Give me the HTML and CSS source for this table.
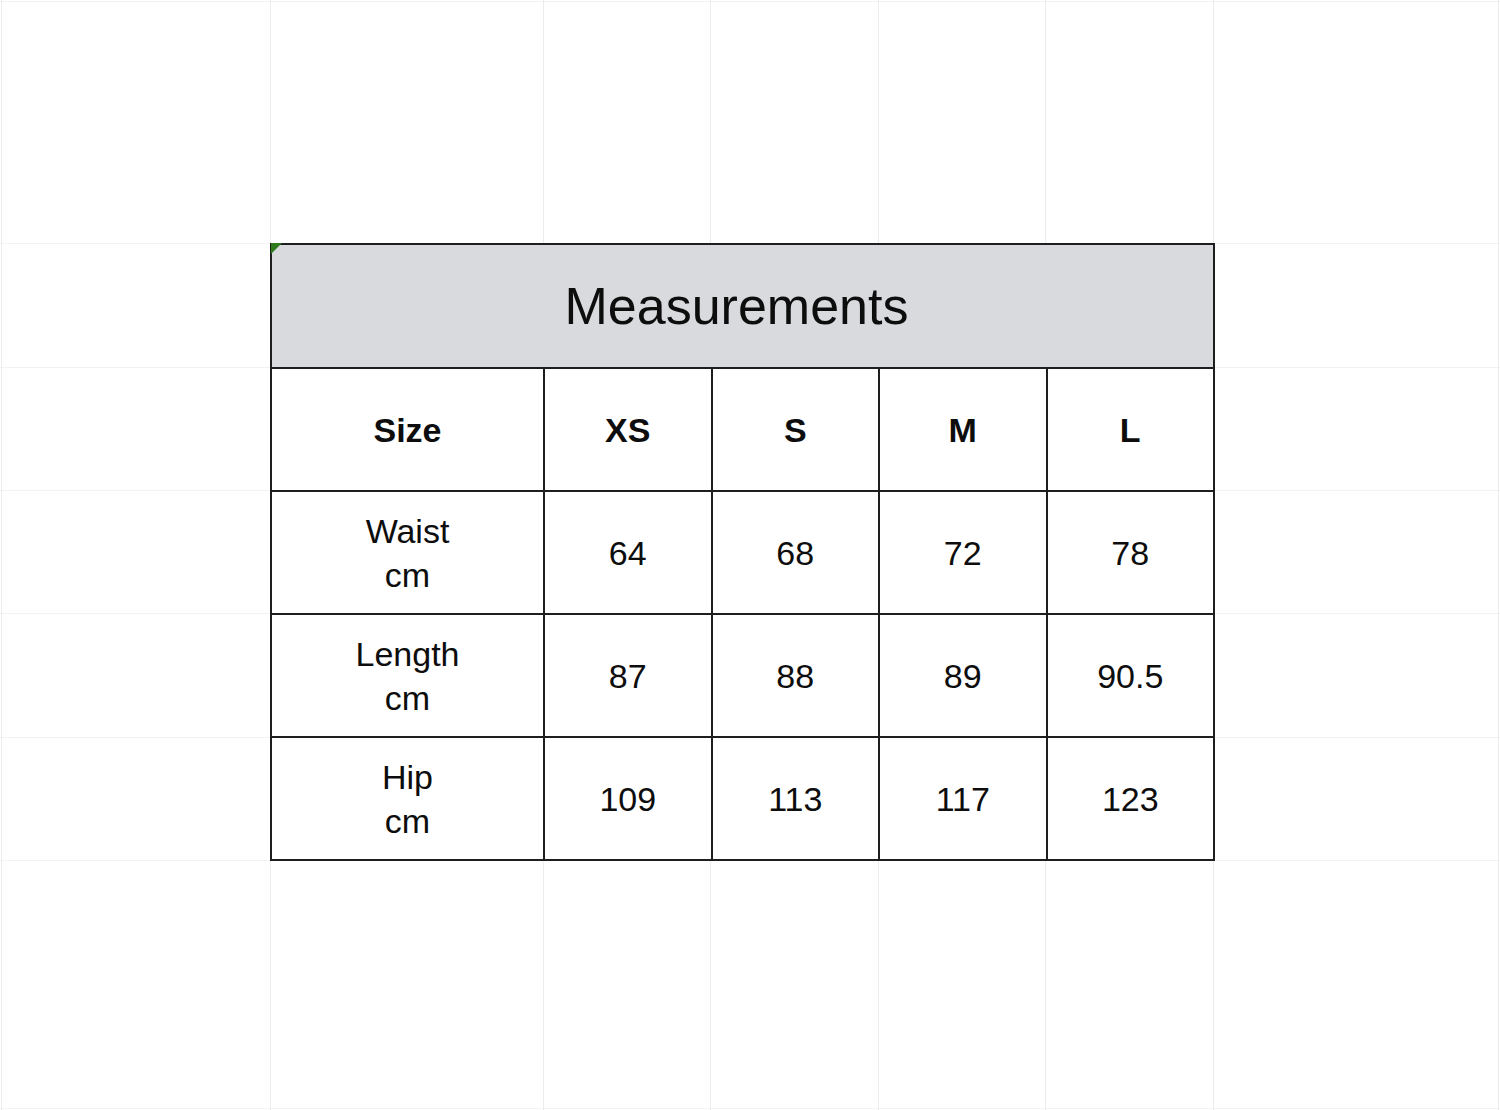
FILE: index.html
```html
<!DOCTYPE html>
<html lang="en">
<head>
<meta charset="utf-8">
<title>Measurements</title>
<link rel="stylesheet" href="styles.css">
</head>
<body>
<div class="sheet">
  <table class="size-table">
    <colgroup>
      <col class="c-label">
      <col class="c-size">
      <col class="c-size">
      <col class="c-size">
      <col class="c-size">
    </colgroup>
    <tr class="title-row">
      <th colspan="5" class="title">Measurements</th>
    </tr>
    <tr class="head-row">
      <th>Size</th><th>XS</th><th>S</th><th>M</th><th>L</th>
    </tr>
    <tr>
      <td>Waist<br>cm</td><td>64</td><td>68</td><td>72</td><td>78</td>
    </tr>
    <tr>
      <td>Length<br>cm</td><td>87</td><td>88</td><td>89</td><td>90.5</td>
    </tr>
    <tr>
      <td>Hip<br>cm</td><td>109</td><td>113</td><td>117</td><td>123</td>
    </tr>
  </table>
</div>
</body>
</html>
```
FILE: styles.css
```css
html, body {
  margin: 0;
  padding: 0;
  background: #ffffff;
}

.sheet {
  width: 1500px;
  height: 1110px;
  box-sizing: border-box;
  padding: 243px 0 0 270px;
  background-color: #ffffff;
  background-repeat: no-repeat;
  background-image:
    linear-gradient(#ececec, #ececec),
    linear-gradient(#ececec, #ececec),
    linear-gradient(#ececec, #ececec),
    linear-gradient(#ececec, #ececec),
    linear-gradient(#ececec, #ececec),
    linear-gradient(#ececec, #ececec),
    linear-gradient(#ececec, #ececec),
    linear-gradient(#ececec, #ececec),
    linear-gradient(#f2f2f2, #f2f2f2),
    linear-gradient(#f2f2f2, #f2f2f2),
    linear-gradient(#f2f2f2, #f2f2f2),
    linear-gradient(#f2f2f2, #f2f2f2),
    linear-gradient(#f2f2f2, #f2f2f2),
    linear-gradient(#f2f2f2, #f2f2f2),
    linear-gradient(#f2f2f2, #f2f2f2),
    linear-gradient(#f2f2f2, #f2f2f2);
  background-size:
    1px 1110px, 1px 1110px, 1px 1110px, 1px 1110px,
    1px 1110px, 1px 1110px, 1px 1110px, 1px 1110px,
    1500px 1px, 1500px 1px, 1500px 1px, 1500px 1px,
    1500px 1px, 1500px 1px, 1500px 1px, 1500px 1px;
  background-position:
    1px 0, 270px 0, 543px 0, 710px 0, 878px 0, 1045px 0, 1213px 0, 1498px 0,
    0 1px, 0 243px, 0 367px, 0 490px, 0 613px, 0 737px, 0 860px, 0 1108px;
}

.size-table {
  position: relative;
  border-collapse: collapse;
  table-layout: fixed;
  width: 943px;
  font-family: "Liberation Sans", Arial, sans-serif;
  color: #0d0d0d;
  background: #ffffff;
}

.size-table::before {
  content: "";
  position: absolute;
  left: 0;
  top: 0;
  width: 0;
  height: 0;
  border-top: 11px solid #2f7a1c;
  border-right: 11px solid transparent;
  z-index: 2;
}

.c-label { width: 273px; }
.c-size { width: 167.5px; }

.size-table th,
.size-table td {
  border: 2px solid #1e1e1e;
  text-align: center;
  vertical-align: middle;
  padding: 0;
  font-size: 34px;
  line-height: 44px;
  height: 121px;
}

.size-table td {
  font-weight: normal;
}

.head-row th {
  font-weight: bold;
}

.title-row .title {
  background: #d9dade;
  font-weight: normal;
  font-size: 52px;
  height: 122px;
  line-height: 60px;
  padding-right: 12px;
}
```
